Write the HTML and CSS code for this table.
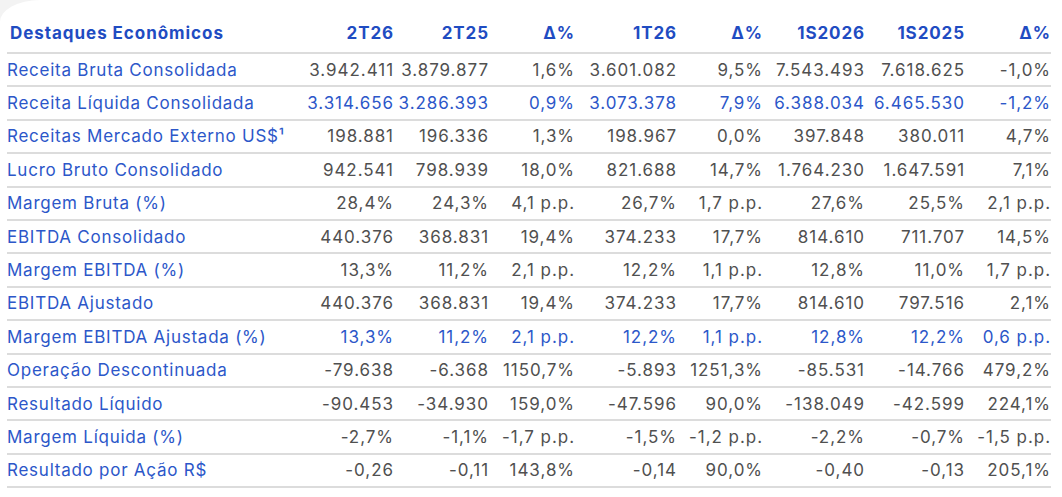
FILE: index.html
```html
<!DOCTYPE html>
<html lang="pt-BR">
<head>
<meta charset="utf-8">
<title>Destaques Econômicos</title>
<link rel="stylesheet" href="styles.css">
</head>
<body>
<div class="card">
<table class="highlights">
<colgroup>
<col class="c-label"><col class="c-1"><col class="c-2"><col class="c-3"><col class="c-4"><col class="c-5"><col class="c-6"><col class="c-7"><col class="c-8">
</colgroup>
<thead>
<tr>
<th class="label">Destaques Econômicos</th><th>2T26</th><th>2T25</th><th>Δ%</th><th>1T26</th><th>Δ%</th><th>1S2026</th><th>1S2025</th><th>Δ%</th>
</tr>
</thead>
<tbody>
<tr><td class="label">Receita Bruta Consolidada</td><td>3.942.411</td><td>3.879.877</td><td>1,6%</td><td>3.601.082</td><td>9,5%</td><td>7.543.493</td><td>7.618.625</td><td>-1,0%</td></tr>
<tr class="hl"><td class="label">Receita Líquida Consolidada</td><td>3.314.656</td><td>3.286.393</td><td>0,9%</td><td>3.073.378</td><td>7,9%</td><td>6.388.034</td><td>6.465.530</td><td>-1,2%</td></tr>
<tr><td class="label">Receitas Mercado Externo US$¹</td><td>198.881</td><td>196.336</td><td>1,3%</td><td>198.967</td><td>0,0%</td><td>397.848</td><td>380.011</td><td>4,7%</td></tr>
<tr><td class="label">Lucro Bruto Consolidado</td><td>942.541</td><td>798.939</td><td>18,0%</td><td>821.688</td><td>14,7%</td><td>1.764.230</td><td>1.647.591</td><td>7,1%</td></tr>
<tr><td class="label">Margem Bruta (%)</td><td>28,4%</td><td>24,3%</td><td>4,1 p.p.</td><td>26,7%</td><td>1,7 p.p.</td><td>27,6%</td><td>25,5%</td><td>2,1 p.p.</td></tr>
<tr><td class="label">EBITDA Consolidado</td><td>440.376</td><td>368.831</td><td>19,4%</td><td>374.233</td><td>17,7%</td><td>814.610</td><td>711.707</td><td>14,5%</td></tr>
<tr><td class="label">Margem EBITDA (%)</td><td>13,3%</td><td>11,2%</td><td>2,1 p.p.</td><td>12,2%</td><td>1,1 p.p.</td><td>12,8%</td><td>11,0%</td><td>1,7 p.p.</td></tr>
<tr><td class="label">EBITDA Ajustado</td><td>440.376</td><td>368.831</td><td>19,4%</td><td>374.233</td><td>17,7%</td><td>814.610</td><td>797.516</td><td>2,1%</td></tr>
<tr class="hl"><td class="label">Margem EBITDA Ajustada (%)</td><td>13,3%</td><td>11,2%</td><td>2,1 p.p.</td><td>12,2%</td><td>1,1 p.p.</td><td>12,8%</td><td>12,2%</td><td>0,6 p.p.</td></tr>
<tr><td class="label">Operação Descontinuada</td><td>-79.638</td><td>-6.368</td><td>1150,7%</td><td>-5.893</td><td>1251,3%</td><td>-85.531</td><td>-14.766</td><td>479,2%</td></tr>
<tr><td class="label">Resultado Líquido</td><td>-90.453</td><td>-34.930</td><td>159,0%</td><td>-47.596</td><td>90,0%</td><td>-138.049</td><td>-42.599</td><td>224,1%</td></tr>
<tr><td class="label">Margem Líquida (%)</td><td>-2,7%</td><td>-1,1%</td><td>-1,7 p.p.</td><td>-1,5%</td><td>-1,2 p.p.</td><td>-2,2%</td><td>-0,7%</td><td>-1,5 p.p.</td></tr>
<tr><td class="label">Resultado por Ação R$</td><td>-0,26</td><td>-0,11</td><td>143,8%</td><td>-0,14</td><td>90,0%</td><td>-0,40</td><td>-0,13</td><td>205,1%</td></tr>
</tbody>
</table>
</div>
</body>
</html>
```
FILE: styles.css
```css
html, body {
  margin: 0;
  padding: 0;
  background: #f3f3f3;
}
body {
  font-family: Inter, "Noto Sans", "Liberation Sans", sans-serif;
  -webkit-font-smoothing: antialiased;
}
.card {
  padding: 0 11px 0 7px;
  min-height: 100vh;
  box-sizing: border-box;
  background: #ffffff;
  border-top-left-radius: 40px 22px;
}
.highlights {
  width: 1044px;
  border-collapse: collapse;
  table-layout: fixed;
}
.c-label { width: 287px; }
.c-1 { width: 100px; }
.c-2 { width: 95px; }
.c-3 { width: 86px; }
.c-4 { width: 102px; }
.c-5 { width: 86px; }
.c-6 { width: 102px; }
.c-7 { width: 100px; }
.c-8 { width: 86px; }
.highlights th,
.highlights td {
  padding: 0;
  text-align: right;
  white-space: nowrap;
  font-size: 17px;
}
.highlights th {
  height: 53px;
  padding-top: 13px;
  box-sizing: border-box;
  font-weight: 700;
  color: #1f4cc2;
  letter-spacing: 0.9px;
}
.highlights th.label {
  padding-left: 3px;
  letter-spacing: 0.95px;
}
.highlights thead tr {
  border-bottom: 2px solid #dcdcdc;
}
.highlights tbody tr {
  border-bottom: 2px solid #dcdcdc;
  height: 33.4px;
}
.highlights td {
  color: #505050;
  font-weight: 400;
  letter-spacing: 0.95px;
}
.highlights td.label,
.highlights th.label {
  text-align: left;
}
.highlights td.label {
  color: #2c57c9;
  letter-spacing: 0.75px;
}
.highlights tr.hl td {
  color: #2c57c9;
}
```
